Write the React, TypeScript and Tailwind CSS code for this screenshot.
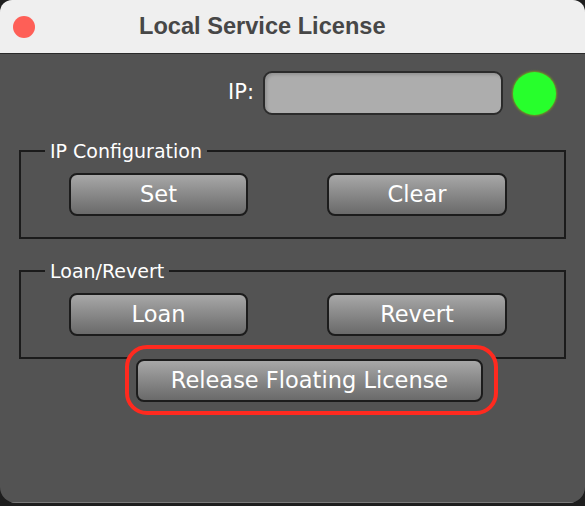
import React from 'react';

const btnClass =
  'h-[43px] rounded-[8px] border-2 border-[#1c1c1c] bg-gradient-to-b from-[#a8a8a8] to-[#6a6a6a] text-white text-[22.5px] leading-none';

const Group: React.FC<{ legend: string; left: string; right: string }> = ({ legend, left, right }) => (
  <fieldset className="mx-[19px] border-2 border-[#1b1b1b] px-0 pb-[21px] pt-[11px]">
    <legend className="ml-[24px] px-[5px] text-[19px] leading-[22px] text-white">{legend}</legend>
    <div className="flex gap-[79px] pl-[48px]">
      <button className={`${btnClass} w-[179px]`}>{left}</button>
      <button className={`${btnClass} w-[180px]`}>{right}</button>
    </div>
  </fieldset>
);

export default function App() {
  return (
    <div className="h-[506px] w-[585px] bg-[#1e1e1e]" style={{ fontFamily: '"DejaVu Sans", sans-serif' }}>
      <div className="flex h-[503px] flex-col overflow-hidden rounded-t-[12px] rounded-b-[16px]">
        {/* Title bar */}
        <div className="flex h-[54px] shrink-0 items-center border-b border-[#2a2a2a] bg-[#efefef]">
          <div className="ml-[13px] h-[22px] w-[22px] rounded-full bg-[#fe5f57]" />
          <h1
            className="ml-[104px] text-[23.6px] font-bold text-[#474747]"
            style={{ fontFamily: '"Liberation Sans", Arial, sans-serif' }}
          >
            Local Service License
          </h1>
        </div>

        {/* Body */}
        <div className="flex-1 border-b border-[#7a7a7a] bg-[#535353]">
          <div className="mt-[17px] flex items-center justify-end pr-[29px]">
            <span className="mr-[9px] text-[21px] text-white">IP:</span>
            <div className="h-[44px] w-[240px] rounded-[9px] border-2 border-[#2b2b2b] bg-[#adadad] shadow-[inset_2px_2px_3px_rgba(0,0,0,0.15)]" />
            <div className="ml-[10px] h-[43px] w-[43px] rounded-full bg-[#27ff2c] shadow-[0_0_2px_1px_#6f9a22]" />
          </div>

          <div className="mt-[25px]">
            <Group legend="IP Configuration" left="Set" right="Clear" />
          </div>
          <div className="mt-[21px]">
            <Group legend="Loan/Revert" left="Loan" right="Revert" />
          </div>

          <div className="relative z-10 -mt-[14px] ml-[125px] w-[373px] rounded-[22px] border-4 border-[#ff2a1f] bg-[#535353] pb-[9px] pl-[7px] pr-[11px] pt-[10px]">
            <button className={`${btnClass} h-[42px] w-full`}>Release Floating License</button>
          </div>
        </div>
      </div>
    </div>
  );
}
